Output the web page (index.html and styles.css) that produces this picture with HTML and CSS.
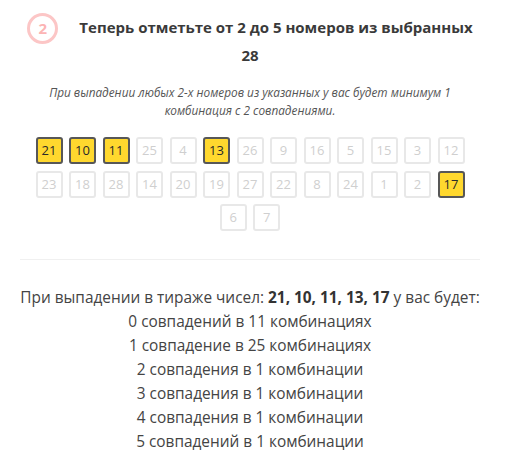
FILE: index.html
```html
<!DOCTYPE html>
<html lang="ru">
<head>
<meta charset="utf-8">
<link rel="stylesheet" href="styles.css">
</head>
<body>
<div class="page">
  <h2 class="title"><span class="step">2</span>Теперь отметьте от 2 до 5 номеров из выбранных 28</h2>
  <p class="note">При выпадении любых 2-х номеров из указанных у вас будет минимум 1 комбинация с 2 совпадениями.</p>
  <div class="grid">
    <span class="num on">21</span><span class="num on">10</span><span class="num on">11</span><span class="num">25</span><span class="num">4</span><span class="num on">13</span><span class="num">26</span><span class="num">9</span><span class="num">16</span><span class="num">5</span><span class="num">15</span><span class="num">3</span><span class="num">12</span>
    <span class="num">23</span><span class="num">18</span><span class="num">28</span><span class="num">14</span><span class="num">20</span><span class="num">19</span><span class="num">27</span><span class="num">22</span><span class="num">8</span><span class="num">24</span><span class="num">1</span><span class="num">2</span><span class="num on">17</span>
    <span class="num">6</span><span class="num">7</span>
  </div>
  <hr class="sep">
  <div class="result">
    <p>При выпадении в тираже чисел: <b>21, 10, 11, 13, 17</b> у вас будет:</p>
    <p>0 совпадений в 11 комбинациях</p>
    <p>1 совпадение в 25 комбинациях</p>
    <p>2 совпадения в 1 комбинации</p>
    <p>3 совпадения в 1 комбинации</p>
    <p>4 совпадения в 1 комбинации</p>
    <p>5 совпадений в 1 комбинации</p>
  </div>
</div>
</body>
</html>
```
FILE: styles.css
```css
html, body {
  margin: 0;
  padding: 0;
  background: #fff;
}
body {
  font-family: "Open Sans", "Noto Sans", sans-serif;
  color: #444;
}
.page {
  width: 460px;
  margin-left: 20px;
  padding-top: 13px;
}
.title {
  margin: 0 7px;
  text-align: center;
  font-size: 15px;
  line-height: 28px;
  font-weight: 700;
  color: #3a3a3a;
}
.step {
  display: inline-block;
  box-sizing: border-box;
  width: 31px;
  height: 31px;
  border: 3px solid #fcc6c6;
  border-radius: 50%;
  color: #fcb4b4;
  font-size: 15px;
  line-height: 25px;
  text-align: center;
  vertical-align: middle;
  margin: -6px 21px -6px 0;
}
.note {
  margin: 14px 0 0;
  padding: 0 24px;
  text-align: center;
  font-style: italic;
  font-size: 11.8px;
  line-height: 18px;
  color: #555;
}
.grid {
  margin: 15px 7px 0;
  display: flex;
  flex-wrap: wrap;
  justify-content: center;
}
.num {
  box-sizing: border-box;
  width: 27px;
  height: 27px;
  margin: 3.25px;
  border: 2px solid #e8e8e8;
  border-radius: 3px;
  color: #cfcfcf;
  font-size: 13px;
  line-height: 23px;
  text-align: center;
}
.num.on {
  background: #ffd82e;
  border-color: #575757;
  color: #2a2a2a;
}
.sep {
  margin: 24px 0 0;
  border: 0;
  height: 1px;
  background: #f0f0f0;
}
.result {
  margin-top: 26px;
  text-align: center;
  font-size: 15.4px;
  line-height: 24px;
  color: #444;
}
.result p {
  margin: 0;
}
.result b {
  color: #333;
}
```
